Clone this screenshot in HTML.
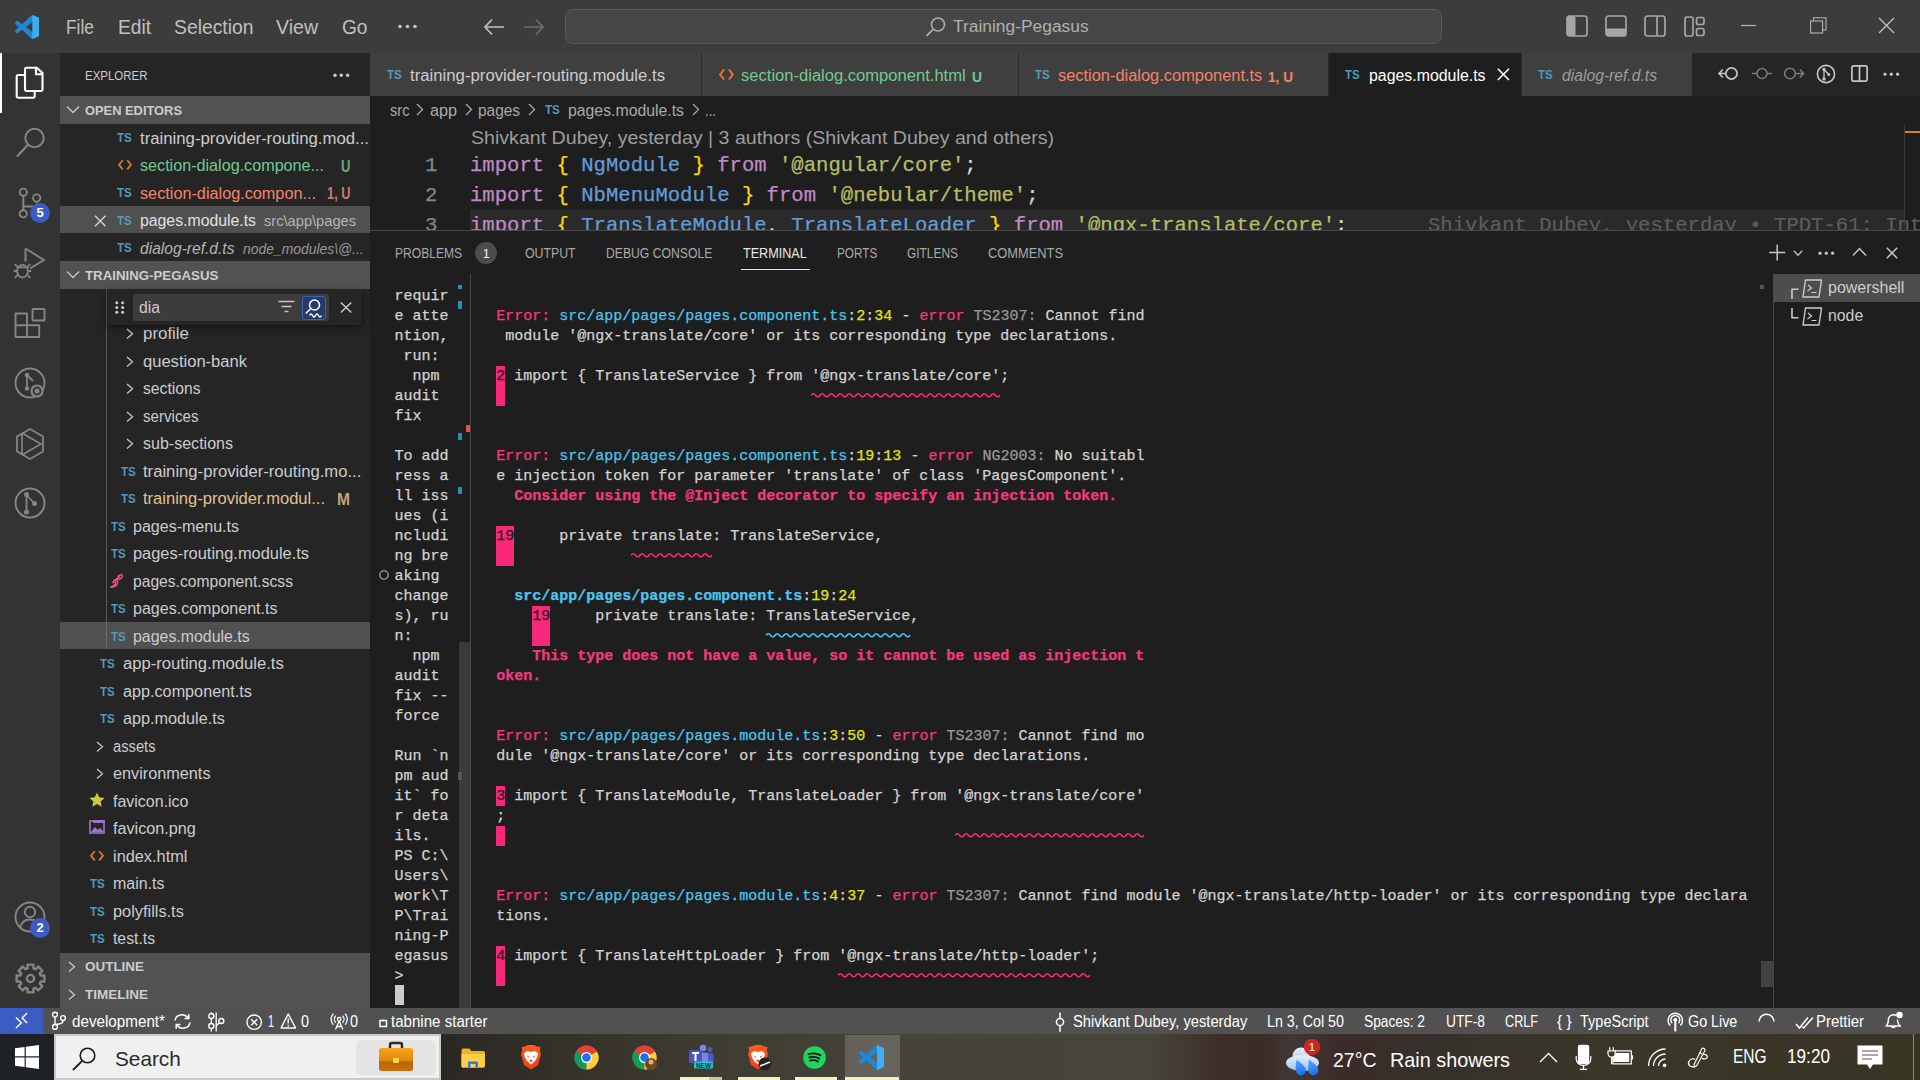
<!DOCTYPE html>
<html><head><meta charset="utf-8">
<style>
*{margin:0;padding:0;box-sizing:border-box}
html,body{width:1920px;height:1080px;overflow:hidden;background:#1e1e1e;font-family:"Liberation Sans",sans-serif;color:#cccccc}
.a{position:absolute}
.t{position:absolute;white-space:pre;line-height:1}
.mono{font-family:"Liberation Mono",monospace;-webkit-text-stroke:0.25px currentColor}
svg{position:absolute;overflow:visible}
#title{left:0;top:0;width:1920px;height:53px;background:#3c3c3c}
#act{left:0;top:53px;width:60px;height:955px;background:#333333}
#side{left:60px;top:53px;width:310px;height:955px;background:#252526}
#tabs{left:370px;top:53px;width:1550px;height:43px;background:#252526}
#editor{left:370px;top:96px;width:1550px;height:135px;background:#1e1e1e}
#panel{left:370px;top:230px;width:1550px;height:778px;background:#1e1e1e;border-top:1px solid #474747}
#status{left:0;top:1008px;width:1920px;height:26px;background:#515151}
#taskbar{left:0;top:1034px;width:1920px;height:46px;background:linear-gradient(90deg,#1e2226 0.00%,#1e2226 2.81%,#2b2723 22.92%,#34302a 29.17%,#3e3c31 36.46%,#46443a 46.88%,#47453a 59.90%,#3d2e27 63.54%,#3b2b25 65.62%,#403836 67.19%,#3c2b28 69.79%,#35302b 73.96%,#3a3629 83.33%,#393525 100.00%)}
.hdr{position:absolute;left:60px;width:310px;height:28px;background:#525252}
.sel{position:absolute;left:60px;width:310px;height:27px;background:#505050}
.si{font-size:16.2px;color:#cccccc}
.ts{position:absolute;font-family:"Liberation Sans",sans-serif;font-weight:bold;font-size:13px;color:#519aba;line-height:1;letter-spacing:-0.5px}
</style></head><body>
<div id="title" class="a"></div>
<div id="act" class="a"></div>
<div id="side" class="a"></div>
<div id="tabs" class="a"></div>
<div id="editor" class="a"></div>
<div id="panel" class="a"></div>
<div id="status" class="a"></div>
<div id="taskbar" class="a"></div>

<!-- TITLE BAR -->
<svg style="left:15px;top:15px" width="24" height="24" viewBox="0 0 100 100">
<defs><linearGradient id="vsg" x1="0" y1="0" x2="0" y2="1"><stop offset="0" stop-color="#3a9ee0"/><stop offset="1" stop-color="#0f7fd4"/></linearGradient></defs>
<path fill="#1e88d8" d="M96.46 10.8L75.86.87a6.23 6.23 0 0 0-7.1 1.2L29.33 38.04 12.15 25.01a4.16 4.16 0 0 0-5.32.24L1.33 30.25a4.16 4.16 0 0 0 0 6.16L16.23 50 1.33 63.6a4.16 4.16 0 0 0 0 6.14l5.5 5a4.16 4.16 0 0 0 5.32.24l17.18-13.04 39.43 35.97a6.23 6.23 0 0 0 7.1 1.2l20.6-9.92A6.25 6.25 0 0 0 100 83.6V16.4a6.25 6.25 0 0 0-3.54-5.6zM75.01 72.7L45.1 50l29.9-22.7v45.4z"/>
<path fill="#3fb0f6" d="M75.86.87a6.23 6.23 0 0 0-7.1 1.2L72 0v100l3.86-.87 20.6-9.92A6.25 6.25 0 0 0 100 83.6V16.4a6.25 6.25 0 0 0-3.54-5.6z" opacity="0.9"/>
</svg>
<svg style="left:398px;top:24px" width="20" height="5"><circle cx="2" cy="2.5" r="1.8" fill="#c3c3c3"/><circle cx="9.5" cy="2.5" r="1.8" fill="#c3c3c3"/><circle cx="17" cy="2.5" r="1.8" fill="#c3c3c3"/></svg>
<svg style="left:484px;top:18px" width="21" height="18"><path d="M8 1.5L1 9l7 7.5M1 9h19" stroke="#c0c0c0" stroke-width="1.7" fill="none"/></svg>
<svg style="left:523px;top:18px" width="21" height="18"><path d="M13 1.5L20 9l-7 7.5M20 9H1" stroke="#6e6e6e" stroke-width="1.7" fill="none"/></svg>
<div class="a" style="left:565px;top:9px;width:877px;height:35px;border-radius:8px;background:#464646;border:1px solid #595959"></div>
<svg style="left:925px;top:16px" width="22" height="22"><circle cx="13" cy="8.5" r="6.5" stroke="#aaaaaa" stroke-width="1.6" fill="none"/><path d="M8.3 13.2L1.5 20" stroke="#aaaaaa" stroke-width="1.8"/></svg>
<div class="t" style="left:953px;top:18px;font-size:17.4px;color:#b0b0b0">Training-Pegasus</div>
<!-- layout icons -->
<svg style="left:1566px;top:15px" width="22" height="22"><rect x="1" y="1" width="20" height="20" rx="2.5" stroke="#a6a6a6" stroke-width="1.7" fill="none"/><rect x="1" y="1" width="8.5" height="20" rx="2" fill="#a6a6a6"/></svg>
<svg style="left:1605px;top:15px" width="22" height="22"><rect x="1" y="1" width="20" height="20" rx="2.5" stroke="#a6a6a6" stroke-width="1.7" fill="none"/><rect x="1" y="13.5" width="20" height="7.5" rx="2" fill="#a6a6a6"/></svg>
<svg style="left:1644px;top:15px" width="22" height="22"><rect x="1" y="1" width="20" height="20" rx="2.5" stroke="#a6a6a6" stroke-width="1.7" fill="none"/><path d="M13 1v20" stroke="#a6a6a6" stroke-width="1.7"/></svg>
<svg style="left:1684px;top:16px" width="21" height="21"><rect x="1" y="1" width="8" height="19" rx="2" stroke="#a6a6a6" stroke-width="1.7" fill="none"/><rect x="12.5" y="1.5" width="7.5" height="7" rx="2" stroke="#a6a6a6" stroke-width="1.7" fill="none"/><rect x="12.5" y="12.5" width="7.5" height="7" rx="2" stroke="#a6a6a6" stroke-width="1.7" fill="none"/></svg>
<svg style="left:1741px;top:24px" width="16" height="3"><path d="M0 1.5h15" stroke="#b5b5b5" stroke-width="1.2"/></svg>
<svg style="left:1810px;top:17px" width="17" height="17"><rect x="0.6" y="4" width="12" height="12" stroke="#b5b5b5" stroke-width="1.1" fill="none"/><path d="M3.5 4V0.8h12.5v12.2H12.6" stroke="#b5b5b5" stroke-width="1.1" fill="none"/></svg>
<svg style="left:1878px;top:17px" width="17" height="17"><path d="M1 1l15 15M16 1L1 16" stroke="#c5c5c5" stroke-width="1.2"/></svg>

<!-- ACTIVITY BAR -->
<div class="a" style="left:0;top:53px;width:2px;height:60px;background:#ffffff"></div>
<svg style="left:15px;top:66px" width="30" height="34"><path d="M9.5 9H3.2a1.5 1.5 0 0 0-1.5 1.5v19.7a1.5 1.5 0 0 0 1.5 1.5h15a1.5 1.5 0 0 0 1.5-1.5V25" stroke="#ffffff" stroke-width="2.1" fill="none"/><path d="M10 3.2a1.5 1.5 0 0 1 1.5-1.5h10.3l5.7 5.2v16.6a1.5 1.5 0 0 1-1.5 1.5H11.5a1.5 1.5 0 0 1-1.5-1.5z" stroke="#ffffff" stroke-width="2.1" fill="none"/><path d="M21 2v6.2h6.5" stroke="#ffffff" stroke-width="2.1" fill="none"/></svg>
<svg style="left:15px;top:126px" width="32" height="34"><circle cx="19.5" cy="12" r="9.2" stroke="#858585" stroke-width="2" fill="none"/><path d="M13 18.8L2 30.5" stroke="#858585" stroke-width="2.2"/></svg>
<svg style="left:15px;top:185px" width="32" height="36"><circle cx="8.3" cy="7.2" r="3.6" stroke="#858585" stroke-width="1.9" fill="none"/><circle cx="8.3" cy="28.8" r="3.6" stroke="#858585" stroke-width="1.9" fill="none"/><circle cx="21.7" cy="13" r="3.6" stroke="#858585" stroke-width="1.9" fill="none"/><path d="M8.3 10.8v14.4M8.3 21.5h10M21.7 16.6v2" stroke="#858585" stroke-width="1.9" fill="none"/></svg>
<div class="a" style="left:30px;top:203px;width:20px;height:20px;border-radius:10px;background:#3b5cc5;color:#fff;font-size:13px;font-weight:bold;text-align:center;line-height:20px">5</div>
<svg style="left:13px;top:244px" width="34" height="36"><path d="M12.5 4.5v13M12.5 4.5l18.5 11.5-14 8.5" stroke="#858585" stroke-width="2" fill="none" stroke-linejoin="round"/><g stroke="#858585" stroke-width="1.8" fill="none"><ellipse cx="9.5" cy="27.2" rx="5.4" ry="6.3"/><path d="M4.5 23.3h10M1.8 20l2.8 3.2M0.8 27h3.4M1.8 34l2.8-3M17.2 20l-2.8 3.2M18.2 27h-3.4M17.2 34l-2.8-3"/></g></svg>
<svg style="left:0px;top:0px" width="60" height="400"><g stroke="#858585" stroke-width="1.9" fill="none" stroke-linejoin="round"><path d="M15.5 313.5h11.5v23.5H15.5zM15.5 325.3h23.7v11.7H27"/><rect x="32.5" y="309" width="12" height="11.5" rx="0.8"/></g></svg>
<svg style="left:13px;top:366px" width="34" height="34"><circle cx="17" cy="17" r="14.5" stroke="#858585" stroke-width="1.9" fill="none"/><circle cx="14" cy="9" r="2.3" fill="#858585"/><circle cx="14" cy="22.5" r="2.3" fill="#858585"/><path d="M14 9v13.5M14 9l6 6" stroke="#858585" stroke-width="1.8" fill="none"/><circle cx="24" cy="25" r="5.5" stroke="#858585" stroke-width="2.2" fill="#333333"/><circle cx="24" cy="25" r="2.5" fill="#858585"/></svg>
<svg style="left:14px;top:427px" width="32" height="32"><path d="M16 2l13 7.5v15L16 32 3 24.5v-15z" stroke="#858585" stroke-width="1.8" fill="none" stroke-linejoin="round"/><path d="M8 6v22M8 6l19 11L8 28" stroke="#858585" stroke-width="1.6" fill="none"/></svg>
<svg style="left:13px;top:486px" width="34" height="34"><circle cx="17" cy="17" r="14.5" stroke="#858585" stroke-width="1.9" fill="none"/><circle cx="13.5" cy="8.5" r="2.5" fill="#858585"/><circle cx="13.5" cy="26" r="2.6" fill="#858585"/><circle cx="21.5" cy="17.5" r="2.5" fill="#858585"/><path d="M13.5 8.5v17.5M13.5 9l8 8.5" stroke="#858585" stroke-width="1.8" fill="none"/></svg>
<svg style="left:13px;top:900px" width="34" height="34"><circle cx="17" cy="17" r="14.5" stroke="#858585" stroke-width="1.9" fill="none"/><circle cx="17" cy="12" r="5.2" stroke="#858585" stroke-width="1.9" fill="none"/><path d="M7 28c1.5-6 5-8.5 10-8.5s8.5 2.5 10 8.5" stroke="#858585" stroke-width="1.9" fill="none"/></svg>
<div class="a" style="left:30px;top:918px;width:20px;height:20px;border-radius:10px;background:#3b5cc5;color:#fff;font-size:13px;font-weight:bold;text-align:center;line-height:20px">2</div>
<svg style="left:14.5px;top:962.5px" width="31" height="31"><path d="M25.69 12.58 L29.39 12.55 L29.39 18.45 L25.69 18.42 L24.77 20.64 L27.41 23.23 L23.23 27.41 L20.64 24.77 L18.42 25.69 L18.45 29.39 L12.55 29.39 L12.58 25.69 L10.36 24.77 L7.77 27.41 L3.59 23.23 L6.23 20.64 L5.31 18.42 L1.61 18.45 L1.61 12.55 L5.31 12.58 L6.23 10.36 L3.59 7.77 L7.77 3.59 L10.36 6.23 L12.58 5.31 L12.55 1.61 L18.45 1.61 L18.42 5.31 L20.64 6.23 L23.23 3.59 L27.41 7.77 L24.77 10.36z" stroke="#858585" stroke-width="2.4" fill="none" stroke-linejoin="round"/><circle cx="15.5" cy="15.5" r="3.6" stroke="#858585" stroke-width="2.3" fill="none"/></svg>


<div class="t" style="left:65.60px;top:16.85px;font-size:20.5px;color:#c0c0c0;font-weight:normal;font-style:normal;font-family:'Liberation Sans';transform:scaleX(0.8477);transform-origin:0 0;">File</div>
<div class="t" style="left:118.00px;top:16.85px;font-size:20.5px;color:#c0c0c0;font-weight:normal;font-style:normal;font-family:'Liberation Sans';transform:scaleX(0.9342);transform-origin:0 0;">Edit</div>
<div class="t" style="left:174.00px;top:16.85px;font-size:20.5px;color:#c0c0c0;font-weight:normal;font-style:normal;font-family:'Liberation Sans';transform:scaleX(0.9427);transform-origin:0 0;">Selection</div>
<div class="t" style="left:276.00px;top:16.85px;font-size:20.5px;color:#c0c0c0;font-weight:normal;font-style:normal;font-family:'Liberation Sans';transform:scaleX(0.9532);transform-origin:0 0;">View</div>
<div class="t" style="left:342.00px;top:16.85px;font-size:20.5px;color:#c0c0c0;font-weight:normal;font-style:normal;font-family:'Liberation Sans';transform:scaleX(0.9325);transform-origin:0 0;">Go</div>
<div class="t" style="left:85.00px;top:68.99px;font-size:13.6px;color:#cccccc;font-weight:normal;font-style:normal;font-family:'Liberation Sans';transform:scaleX(0.8442);transform-origin:0 0;">EXPLORER</div>
<svg style="left:333px;top:73px" width="17" height="5"><circle cx="2" cy="2.2" r="1.7" fill="#cccccc"/><circle cx="8.3" cy="2.2" r="1.7" fill="#cccccc"/><circle cx="14.6" cy="2.2" r="1.7" fill="#cccccc"/></svg>
<div class="hdr" style="top:96px"></div>
<svg style="left:66px;top:105px" width="14" height="9"><path d="M1 1.5l6 6 6-6" stroke="#c5c5c5" stroke-width="1.4" fill="none"/></svg>
<div class="t" style="left:85.00px;top:103.83px;font-size:13.2px;color:#cccccc;font-weight:bold;font-style:normal;font-family:'Liberation Sans';transform:scaleX(0.9757);transform-origin:0 0;">OPEN EDITORS</div>
<div class="t" style="left:117.30px;top:132.37px;font-size:12.2px;color:#519aba;font-weight:bold;font-style:normal;font-family:'Liberation Sans';transform:scaleX(0.9503);transform-origin:0 0;letter-spacing:0px">TS</div>
<div class="t" style="left:140.30px;top:130.66px;font-size:16px;color:#cccccc;font-weight:normal;font-style:normal;font-family:'Liberation Sans';transform:scaleX(1.0468);transform-origin:0 0;">training-provider-routing.mod...</div>
<svg style="left:117.5px;top:159.2px" width="14" height="12"><path d="M4.8 1.2L1 5.8l3.8 4.6M9.2 1.2L13 5.8l-3.8 4.6" stroke="#e37933" stroke-width="1.7" fill="none"/></svg>
<div class="t" style="left:140.30px;top:158.16px;font-size:16px;color:#73c991;font-weight:normal;font-style:normal;font-family:'Liberation Sans';transform:scaleX(1.0092);transform-origin:0 0;">section-dialog.compone...</div>
<div class="t" style="left:341.00px;top:157.73px;font-size:16.5px;color:#6fa57f;font-weight:bold;font-style:normal;font-family:'Liberation Sans';transform:scaleX(0.7973);transform-origin:0 0;">U</div>
<div class="t" style="left:117.30px;top:187.37px;font-size:12.2px;color:#519aba;font-weight:bold;font-style:normal;font-family:'Liberation Sans';transform:scaleX(0.9503);transform-origin:0 0;letter-spacing:0px">TS</div>
<div class="t" style="left:140.30px;top:185.66px;font-size:16px;color:#f3826d;font-weight:normal;font-style:normal;font-family:'Liberation Sans';transform:scaleX(1.0148);transform-origin:0 0;">section-dialog.compon...</div>
<div class="t" style="left:326.60px;top:185.23px;font-size:16.5px;color:#c97a68;font-weight:bold;font-style:normal;font-family:'Liberation Sans';transform:scaleX(0.7766);transform-origin:0 0;">1, U</div>
<div class="sel" style="top:206.2px;height:27px"></div>
<svg style="left:94px;top:215.2px" width="13" height="12"><path d="M1 0.8l10.5 10.5M11.5 0.8L1 11.3" stroke="#d0d0d0" stroke-width="1.5"/></svg>
<div class="t" style="left:117.30px;top:214.87px;font-size:12.2px;color:#519aba;font-weight:bold;font-style:normal;font-family:'Liberation Sans';transform:scaleX(0.9503);transform-origin:0 0;letter-spacing:0px">TS</div>
<div class="t" style="left:140.30px;top:213.16px;font-size:16px;color:#e0e0e0;font-weight:normal;font-style:normal;font-family:'Liberation Sans';transform:scaleX(0.9880);transform-origin:0 0;">pages.module.ts</div>
<div class="t" style="left:264.40px;top:214.34px;font-size:14.6px;color:#b5b5b5;font-weight:normal;font-style:normal;font-family:'Liberation Sans';transform:scaleX(1.0036);transform-origin:0 0;">src\app\pages</div>
<div class="t" style="left:117.30px;top:242.37px;font-size:12.2px;color:#519aba;font-weight:bold;font-style:normal;font-family:'Liberation Sans';transform:scaleX(0.9503);transform-origin:0 0;letter-spacing:0px">TS</div>
<div class="t" style="left:140.30px;top:240.66px;font-size:16px;color:#b4b4b4;font-weight:normal;font-style:italic;font-family:'Liberation Sans';transform:scaleX(0.9749);transform-origin:0 0;">dialog-ref.d.ts</div>
<div class="t" style="left:243.00px;top:241.84px;font-size:14.6px;color:#989898;font-weight:normal;font-style:italic;font-family:'Liberation Sans';transform:scaleX(0.9521);transform-origin:0 0;">node_modules\@...</div>
<div class="hdr" style="top:261px"></div>
<svg style="left:66px;top:270px" width="14" height="9"><path d="M1 1.5l6 6 6-6" stroke="#c5c5c5" stroke-width="1.4" fill="none"/></svg>
<div class="t" style="left:85.00px;top:269.03px;font-size:13.2px;color:#cccccc;font-weight:bold;font-style:normal;font-family:'Liberation Sans';transform:scaleX(1.0052);transform-origin:0 0;">TRAINING-PEGASUS</div>
<div class="a" style="left:106px;top:289px;width:1px;height:360px;background:#5a5a5a"></div>
<svg style="left:125.5px;top:328.0px" width="9" height="12"><path d="M1 1l5.5 4.8L1 10.6" stroke="#c5c5c5" stroke-width="1.3" fill="none"/></svg>
<div class="t" style="left:142.50px;top:326.46px;font-size:16px;color:#cccccc;font-weight:normal;font-style:normal;font-family:'Liberation Sans';transform:scaleX(1.0556);transform-origin:0 0;">profile</div>
<svg style="left:125.5px;top:355.5px" width="9" height="12"><path d="M1 1l5.5 4.8L1 10.6" stroke="#c5c5c5" stroke-width="1.3" fill="none"/></svg>
<div class="t" style="left:142.50px;top:353.96px;font-size:16px;color:#cccccc;font-weight:normal;font-style:normal;font-family:'Liberation Sans';transform:scaleX(1.0347);transform-origin:0 0;">question-bank</div>
<svg style="left:125.5px;top:383.0px" width="9" height="12"><path d="M1 1l5.5 4.8L1 10.6" stroke="#c5c5c5" stroke-width="1.3" fill="none"/></svg>
<div class="t" style="left:142.50px;top:381.46px;font-size:16px;color:#cccccc;font-weight:normal;font-style:normal;font-family:'Liberation Sans';transform:scaleX(0.9796);transform-origin:0 0;">sections</div>
<svg style="left:125.5px;top:410.5px" width="9" height="12"><path d="M1 1l5.5 4.8L1 10.6" stroke="#c5c5c5" stroke-width="1.3" fill="none"/></svg>
<div class="t" style="left:142.50px;top:408.96px;font-size:16px;color:#cccccc;font-weight:normal;font-style:normal;font-family:'Liberation Sans';transform:scaleX(0.9458);transform-origin:0 0;">services</div>
<svg style="left:125.5px;top:438.0px" width="9" height="12"><path d="M1 1l5.5 4.8L1 10.6" stroke="#c5c5c5" stroke-width="1.3" fill="none"/></svg>
<div class="t" style="left:142.50px;top:436.46px;font-size:16px;color:#cccccc;font-weight:normal;font-style:normal;font-family:'Liberation Sans';transform:scaleX(1.0020);transform-origin:0 0;">sub-sections</div>
<div class="t" style="left:120.60px;top:465.67px;font-size:12.2px;color:#519aba;font-weight:bold;font-style:normal;font-family:'Liberation Sans';transform:scaleX(0.9503);transform-origin:0 0;letter-spacing:0px">TS</div>
<div class="t" style="left:143.00px;top:463.96px;font-size:16px;color:#cccccc;font-weight:normal;font-style:normal;font-family:'Liberation Sans';transform:scaleX(1.0402);transform-origin:0 0;">training-provider-routing.mo...</div>
<div class="t" style="left:120.60px;top:493.17px;font-size:12.2px;color:#519aba;font-weight:bold;font-style:normal;font-family:'Liberation Sans';transform:scaleX(0.9503);transform-origin:0 0;letter-spacing:0px">TS</div>
<div class="t" style="left:143.00px;top:491.46px;font-size:16px;color:#e2c08d;font-weight:normal;font-style:normal;font-family:'Liberation Sans';transform:scaleX(1.0336);transform-origin:0 0;">training-provider.modul...</div>
<div class="t" style="left:337.00px;top:491.03px;font-size:16.5px;color:#c4a67a;font-weight:bold;font-style:normal;font-family:'Liberation Sans';transform:scaleX(0.9458);transform-origin:0 0;">M</div>
<div class="sel" style="top:622.3px;height:26.6px"></div>
<div class="a" style="left:106px;top:622px;width:1px;height:27px;background:#6a6a6a"></div>
<div class="t" style="left:111.00px;top:520.67px;font-size:12.2px;color:#519aba;font-weight:bold;font-style:normal;font-family:'Liberation Sans';transform:scaleX(0.9503);transform-origin:0 0;letter-spacing:0px">TS</div>
<div class="t" style="left:132.50px;top:518.96px;font-size:16px;color:#cccccc;font-weight:normal;font-style:normal;font-family:'Liberation Sans';transform:scaleX(1.0016);transform-origin:0 0;">pages-menu.ts</div>
<div class="t" style="left:111.00px;top:548.17px;font-size:12.2px;color:#519aba;font-weight:bold;font-style:normal;font-family:'Liberation Sans';transform:scaleX(0.9503);transform-origin:0 0;letter-spacing:0px">TS</div>
<div class="t" style="left:132.50px;top:546.46px;font-size:16px;color:#cccccc;font-weight:normal;font-style:normal;font-family:'Liberation Sans';transform:scaleX(1.0253);transform-origin:0 0;">pages-routing.module.ts</div>
<svg style="left:110px;top:572.5px" width="14" height="16"><path d="M9 2.5c2.5-1.5 4-.5 3 1.5-1 2-4.5 3-6.5 3.5 2.5.5 3 2.5 1 4.5-1.5 1.5-4.5 3-5.5 2 1.5-.5 4-2 4.5-3.5.3-1-1-1.5-2.5-1.2 0-1.5 3-3 5-4.2 1.5-1 1.8-2-.5-1.5z" stroke="#f55385" stroke-width="1.4" fill="none"/></svg>
<div class="t" style="left:132.50px;top:573.96px;font-size:16px;color:#cccccc;font-weight:normal;font-style:normal;font-family:'Liberation Sans';transform:scaleX(0.9777);transform-origin:0 0;">pages.component.scss</div>
<div class="t" style="left:111.00px;top:603.17px;font-size:12.2px;color:#519aba;font-weight:bold;font-style:normal;font-family:'Liberation Sans';transform:scaleX(0.9503);transform-origin:0 0;letter-spacing:0px">TS</div>
<div class="t" style="left:132.50px;top:601.46px;font-size:16px;color:#cccccc;font-weight:normal;font-style:normal;font-family:'Liberation Sans';transform:scaleX(1.0028);transform-origin:0 0;">pages.component.ts</div>
<div class="t" style="left:111.00px;top:630.67px;font-size:12.2px;color:#519aba;font-weight:bold;font-style:normal;font-family:'Liberation Sans';transform:scaleX(0.9503);transform-origin:0 0;letter-spacing:0px">TS</div>
<div class="t" style="left:132.50px;top:628.96px;font-size:16px;color:#cccccc;font-weight:normal;font-style:normal;font-family:'Liberation Sans';transform:scaleX(0.9944);transform-origin:0 0;">pages.module.ts</div>
<div class="t" style="left:99.60px;top:658.17px;font-size:12.2px;color:#519aba;font-weight:bold;font-style:normal;font-family:'Liberation Sans';transform:scaleX(0.9503);transform-origin:0 0;letter-spacing:0px">TS</div>
<div class="t" style="left:122.50px;top:656.46px;font-size:16px;color:#cccccc;font-weight:normal;font-style:normal;font-family:'Liberation Sans';transform:scaleX(1.0387);transform-origin:0 0;">app-routing.module.ts</div>
<div class="t" style="left:99.60px;top:685.67px;font-size:12.2px;color:#519aba;font-weight:bold;font-style:normal;font-family:'Liberation Sans';transform:scaleX(0.9503);transform-origin:0 0;letter-spacing:0px">TS</div>
<div class="t" style="left:122.50px;top:683.96px;font-size:16px;color:#cccccc;font-weight:normal;font-style:normal;font-family:'Liberation Sans';transform:scaleX(1.0122);transform-origin:0 0;">app.component.ts</div>
<div class="t" style="left:99.60px;top:713.17px;font-size:12.2px;color:#519aba;font-weight:bold;font-style:normal;font-family:'Liberation Sans';transform:scaleX(0.9503);transform-origin:0 0;letter-spacing:0px">TS</div>
<div class="t" style="left:122.50px;top:711.46px;font-size:16px;color:#cccccc;font-weight:normal;font-style:normal;font-family:'Liberation Sans';transform:scaleX(1.0124);transform-origin:0 0;">app.module.ts</div>
<svg style="left:95.5px;top:740.5px" width="9" height="12"><path d="M1 1l5.5 4.8L1 10.6" stroke="#c5c5c5" stroke-width="1.3" fill="none"/></svg>
<div class="t" style="left:112.50px;top:738.96px;font-size:16px;color:#cccccc;font-weight:normal;font-style:normal;font-family:'Liberation Sans';transform:scaleX(0.9191);transform-origin:0 0;">assets</div>
<svg style="left:95.5px;top:768.0px" width="9" height="12"><path d="M1 1l5.5 4.8L1 10.6" stroke="#c5c5c5" stroke-width="1.3" fill="none"/></svg>
<div class="t" style="left:112.50px;top:766.46px;font-size:16px;color:#cccccc;font-weight:normal;font-style:normal;font-family:'Liberation Sans';transform:scaleX(1.0151);transform-origin:0 0;">environments</div>
<svg style="left:89px;top:791.5px" width="16" height="16"><path d="M8 .5l2.2 4.8 5.3.6-3.9 3.6 1.1 5.2L8 12.1l-4.7 2.6 1.1-5.2L.5 5.9l5.3-.6z" fill="#cbcb41"/></svg>
<div class="t" style="left:112.50px;top:793.96px;font-size:16px;color:#cccccc;font-weight:normal;font-style:normal;font-family:'Liberation Sans';transform:scaleX(0.9988);transform-origin:0 0;">favicon.ico</div>
<svg style="left:89px;top:820.0px" width="16" height="14"><rect x="1" y="1" width="14" height="12" stroke="#a074c4" stroke-width="1.6" fill="none"/><path d="M2 12l4-5 3 3 2-2 4 4z" fill="#a074c4"/><rect x="4" y="0" width="12" height="3" fill="#a074c4"/></svg>
<div class="t" style="left:112.50px;top:821.46px;font-size:16px;color:#cccccc;font-weight:normal;font-style:normal;font-family:'Liberation Sans';transform:scaleX(1.0118);transform-origin:0 0;">favicon.png</div>
<svg style="left:89.5px;top:850.0px" width="14" height="12"><path d="M4.8 1.2L1 5.8l3.8 4.6M9.2 1.2L13 5.8l-3.8 4.6" stroke="#e37933" stroke-width="1.7" fill="none"/></svg>
<div class="t" style="left:112.50px;top:848.96px;font-size:16px;color:#cccccc;font-weight:normal;font-style:normal;font-family:'Liberation Sans';transform:scaleX(1.0203);transform-origin:0 0;">index.html</div>
<div class="t" style="left:89.50px;top:878.17px;font-size:12.2px;color:#519aba;font-weight:bold;font-style:normal;font-family:'Liberation Sans';transform:scaleX(0.9503);transform-origin:0 0;letter-spacing:0px">TS</div>
<div class="t" style="left:112.50px;top:876.46px;font-size:16px;color:#cccccc;font-weight:normal;font-style:normal;font-family:'Liberation Sans';transform:scaleX(0.9967);transform-origin:0 0;">main.ts</div>
<div class="t" style="left:89.50px;top:905.67px;font-size:12.2px;color:#519aba;font-weight:bold;font-style:normal;font-family:'Liberation Sans';transform:scaleX(0.9503);transform-origin:0 0;letter-spacing:0px">TS</div>
<div class="t" style="left:112.50px;top:903.96px;font-size:16px;color:#cccccc;font-weight:normal;font-style:normal;font-family:'Liberation Sans';transform:scaleX(1.0209);transform-origin:0 0;">polyfills.ts</div>
<div class="t" style="left:89.50px;top:933.17px;font-size:12.2px;color:#519aba;font-weight:bold;font-style:normal;font-family:'Liberation Sans';transform:scaleX(0.9503);transform-origin:0 0;letter-spacing:0px">TS</div>
<div class="t" style="left:112.50px;top:931.46px;font-size:16px;color:#cccccc;font-weight:normal;font-style:normal;font-family:'Liberation Sans';transform:scaleX(0.9841);transform-origin:0 0;">test.ts</div>
<div class="hdr" style="top:953px;height:27.5px"></div>
<div class="hdr" style="top:980.5px;height:27.5px"></div>
<svg style="left:68px;top:960.5px" width="9" height="12"><path d="M1 1l5.5 4.8L1 10.6" stroke="#c5c5c5" stroke-width="1.3" fill="none"/></svg>
<div class="t" style="left:85.00px;top:960.33px;font-size:13.2px;color:#cccccc;font-weight:bold;font-style:normal;font-family:'Liberation Sans';transform:scaleX(1.0194);transform-origin:0 0;">OUTLINE</div>
<svg style="left:68px;top:988.5px" width="9" height="12"><path d="M1 1l5.5 4.8L1 10.6" stroke="#c5c5c5" stroke-width="1.3" fill="none"/></svg>
<div class="t" style="left:85.00px;top:987.83px;font-size:13.2px;color:#cccccc;font-weight:bold;font-style:normal;font-family:'Liberation Sans';transform:scaleX(1.0237);transform-origin:0 0;">TIMELINE</div>
<div class="a" style="left:107px;top:289px;width:255px;height:36px;background:#252526;box-shadow:0 2px 6px rgba(0,0,0,0.5)"></div>
<svg style="left:115px;top:301px" width="10" height="13"><g fill="#cccccc"><circle cx="1.8" cy="1.8" r="1.5"/><circle cx="7.6" cy="1.8" r="1.5"/><circle cx="1.8" cy="6.5" r="1.5"/><circle cx="7.6" cy="6.5" r="1.5"/><circle cx="1.8" cy="11.2" r="1.5"/><circle cx="7.6" cy="11.2" r="1.5"/></g></svg>
<div class="a" style="left:133px;top:293.5px;width:196px;height:27.5px;background:#3c3c3c;border-radius:2px"></div>
<div class="t" style="left:139.00px;top:300.46px;font-size:16px;color:#cccccc;font-weight:normal;font-style:normal;font-family:'Liberation Sans';transform:scaleX(0.9835);transform-origin:0 0;">dia</div>
<svg style="left:278px;top:300px" width="17" height="13"><path d="M0.5 1.5h16M3.5 6.5h10M6.5 11.5h4" stroke="#c5c5c5" stroke-width="1.4"/></svg>
<div class="a" style="left:301.5px;top:295.5px;width:24.5px;height:24.5px;background:#263a6a;border:1px solid #3d5fc0;border-radius:3px"></div>
<svg style="left:304px;top:298px" width="20" height="20"><circle cx="10.5" cy="7" r="5" stroke="#ffffff" stroke-width="1.5" fill="none"/><path d="M6.8 10.5L1.8 15.5" stroke="#ffffff" stroke-width="1.5" fill="none"/><path d="M5.5 17.5q1.5-3 3 0t3 0 3 0 3 0" stroke="#ffffff" stroke-width="1.4" fill="none"/></svg>
<svg style="left:340px;top:302px" width="12" height="11"><path d="M0.8 0.5l10.5 10M11.3 0.5L0.8 10.5" stroke="#cccccc" stroke-width="1.4"/></svg>
<div class="a" style="left:370px;top:53px;width:1322px;height:43px;background:#3f3f3f"></div>
<div class="a" style="left:1328.5px;top:53px;width:192.5px;height:43px;background:#1e1e1e"></div>
<div class="a" style="left:700.5px;top:53px;width:1px;height:43px;background:#2b2b2b"></div>
<div class="a" style="left:1017.5px;top:53px;width:1px;height:43px;background:#2b2b2b"></div>
<div class="a" style="left:1328px;top:53px;width:1px;height:43px;background:#2b2b2b"></div>
<div class="a" style="left:1521px;top:53px;width:1px;height:43px;background:#2b2b2b"></div>
<div class="t" style="left:387.00px;top:68.87px;font-size:12.2px;color:#519aba;font-weight:bold;font-style:normal;font-family:'Liberation Sans';transform:scaleX(0.9503);transform-origin:0 0;letter-spacing:0px">TS</div>
<div class="t" style="left:410.00px;top:67.66px;font-size:16px;color:#cccccc;font-weight:normal;font-style:normal;font-family:'Liberation Sans';transform:scaleX(1.0465);transform-origin:0 0;">training-provider-routing.module.ts</div>
<svg style="left:719px;top:68px" width="15" height="13"><path d="M5 1.5L1.2 6.5 5 11.5M10 1.5l3.8 5-3.8 5" stroke="#e37933" stroke-width="2" fill="none"/></svg>
<div class="t" style="left:741.00px;top:67.66px;font-size:16px;color:#73c991;font-weight:normal;font-style:normal;font-family:'Liberation Sans';transform:scaleX(1.0354);transform-origin:0 0;">section-dialog.component.html</div>
<div class="t" style="left:972.00px;top:68.50px;font-size:15px;color:#73c991;font-weight:bold;font-style:normal;font-family:'Liberation Sans';transform:scaleX(0.9231);transform-origin:0 0;">U</div>
<div class="t" style="left:1034.60px;top:68.87px;font-size:12.2px;color:#519aba;font-weight:bold;font-style:normal;font-family:'Liberation Sans';transform:scaleX(0.9503);transform-origin:0 0;letter-spacing:0px">TS</div>
<div class="t" style="left:1058.30px;top:67.66px;font-size:16px;color:#f3826d;font-weight:normal;font-style:normal;font-family:'Liberation Sans';transform:scaleX(1.0255);transform-origin:0 0;">section-dialog.component.ts</div>
<div class="t" style="left:1268.00px;top:68.50px;font-size:15px;color:#f3826d;font-weight:bold;font-style:normal;font-family:'Liberation Sans';transform:scaleX(0.9088);transform-origin:0 0;">1, U</div>
<div class="t" style="left:1345.00px;top:68.87px;font-size:12.2px;color:#519aba;font-weight:bold;font-style:normal;font-family:'Liberation Sans';transform:scaleX(0.9503);transform-origin:0 0;letter-spacing:0px">TS</div>
<div class="t" style="left:1368.80px;top:67.66px;font-size:16px;color:#ffffff;font-weight:normal;font-style:normal;font-family:'Liberation Sans';transform:scaleX(0.9923);transform-origin:0 0;">pages.module.ts</div>
<svg style="left:1497px;top:68px" width="13" height="13"><path d="M0.8 0.8l11.2 11.2M12 0.8L0.8 12" stroke="#ffffff" stroke-width="1.6"/></svg>
<div class="t" style="left:1538.40px;top:68.87px;font-size:12.2px;color:#519aba;font-weight:bold;font-style:normal;font-family:'Liberation Sans';transform:scaleX(0.9503);transform-origin:0 0;letter-spacing:0px">TS</div>
<div class="t" style="left:1562.00px;top:67.66px;font-size:16px;color:#9d9d9d;font-weight:normal;font-style:italic;font-family:'Liberation Sans';transform:scaleX(0.9800);transform-origin:0 0;">dialog-ref.d.ts</div>
<svg style="left:1718px;top:66px" width="22" height="15"><circle cx="13.5" cy="7.5" r="5.6" stroke="#c5c5c5" stroke-width="1.7" fill="none"/><path d="M8 7.5H1M4.8 3.5L1 7.5l3.8 4" stroke="#c5c5c5" stroke-width="1.6" fill="none"/></svg>
<svg style="left:1752px;top:66px" width="20" height="15"><circle cx="10" cy="7.5" r="5" stroke="#7a7a7a" stroke-width="1.6" fill="none"/><path d="M0 7.5h5M15 7.5h5" stroke="#7a7a7a" stroke-width="1.6"/></svg>
<svg style="left:1783px;top:66px" width="22" height="15"><circle cx="7" cy="7.5" r="5.3" stroke="#7a7a7a" stroke-width="1.6" fill="none"/><path d="M12.5 7.5H20M16.8 3.5l3.8 4-3.8 4" stroke="#7a7a7a" stroke-width="1.6" fill="none"/></svg>
<svg style="left:1816px;top:64px" width="20" height="20"><circle cx="10" cy="10" r="8.6" stroke="#c5c5c5" stroke-width="1.6" fill="none"/><circle cx="8" cy="5.3" r="1.6" fill="#c5c5c5"/><circle cx="8" cy="15" r="1.7" fill="#c5c5c5"/><circle cx="12.8" cy="10.5" r="1.5" fill="#c5c5c5"/><path d="M8 5v10M8 5.5l4.8 5" stroke="#c5c5c5" stroke-width="1.3" fill="none"/></svg>
<svg style="left:1851px;top:65px" width="17" height="17"><rect x="0.9" y="0.9" width="15.2" height="15.2" rx="1.5" stroke="#c5c5c5" stroke-width="1.7" fill="none"/><path d="M8.5 1v15" stroke="#c5c5c5" stroke-width="1.7"/></svg>
<svg style="left:1883px;top:72px" width="17" height="5"><circle cx="2" cy="2.2" r="1.6" fill="#c5c5c5"/><circle cx="8.3" cy="2.2" r="1.6" fill="#c5c5c5"/><circle cx="14.6" cy="2.2" r="1.6" fill="#c5c5c5"/></svg>
<div class="t" style="left:390.00px;top:103.06px;font-size:16px;color:#a9a9a9;font-weight:normal;font-style:normal;font-family:'Liberation Sans';transform:scaleX(0.9143);transform-origin:0 0;">src</div>
<svg style="left:416px;top:103.39999999999999px" width="8" height="13"><path d="M1 1l5.5 5.5L1 12" stroke="#a9a9a9" stroke-width="1.3" fill="none"/></svg>
<div class="t" style="left:430.00px;top:103.06px;font-size:16px;color:#a9a9a9;font-weight:normal;font-style:normal;font-family:'Liberation Sans';transform:scaleX(1.0114);transform-origin:0 0;">app</div>
<svg style="left:465px;top:103.39999999999999px" width="8" height="13"><path d="M1 1l5.5 5.5L1 12" stroke="#a9a9a9" stroke-width="1.3" fill="none"/></svg>
<div class="t" style="left:477.60px;top:103.06px;font-size:16px;color:#a9a9a9;font-weight:normal;font-style:normal;font-family:'Liberation Sans';transform:scaleX(0.9634);transform-origin:0 0;">pages</div>
<svg style="left:528px;top:103.39999999999999px" width="8" height="13"><path d="M1 1l5.5 5.5L1 12" stroke="#a9a9a9" stroke-width="1.3" fill="none"/></svg>
<div class="t" style="left:545.00px;top:104.27px;font-size:12.2px;color:#519aba;font-weight:bold;font-style:normal;font-family:'Liberation Sans';transform:scaleX(0.9503);transform-origin:0 0;letter-spacing:0px">TS</div>
<div class="t" style="left:568.40px;top:103.06px;font-size:16px;color:#a9a9a9;font-weight:normal;font-style:normal;font-family:'Liberation Sans';transform:scaleX(0.9880);transform-origin:0 0;">pages.module.ts</div>
<svg style="left:692px;top:103.39999999999999px" width="8" height="13"><path d="M1 1l5.5 5.5L1 12" stroke="#a9a9a9" stroke-width="1.3" fill="none"/></svg>
<div class="t" style="left:705.00px;top:103.06px;font-size:16px;color:#a9a9a9;font-weight:normal;font-style:normal;font-family:'Liberation Sans';transform:scaleX(0.8248);transform-origin:0 0;">...</div>
<div class="a" style="left:0;top:0;width:1920px;height:230px;overflow:hidden">
<div class="a" style="left:470px;top:209.5px;width:1434px;height:21px;background:#2a2a2a;border-top:1px solid #333333"></div>
<div class="t" style="left:471.00px;top:129.11px;font-size:18.3px;color:#9d9d9d;font-weight:normal;font-style:normal;font-family:'Liberation Sans';transform:scaleX(1.0717);transform-origin:0 0;">Shivkant Dubey, yesterday | 3 authors (Shivkant Dubey and others)</div>
<div class="t mono" style="left:425px;top:150.78px;font-size:20.6px;line-height:30px;color:#858585">1</div>
<div class="t mono" style="left:425px;top:180.78px;font-size:20.6px;line-height:30px;color:#858585">2</div>
<div class="t mono" style="left:425px;top:210.78px;font-size:20.6px;line-height:30px;color:#858585">3</div>
<div class="t mono" style="left:470px;top:150.78px;font-size:20.6px;line-height:30px"><span style="color:#c08ac4">import </span><span style="color:#ffd700">{</span><span style="color:#659cd6"> NgModule </span><span style="color:#ffd700">}</span><span style="color:#c08ac4"> from </span><span style="color:#b5bd68">'@angular/core'</span><span style="color:#d4d4d4">;</span></div>
<div class="t mono" style="left:470px;top:180.78px;font-size:20.6px;line-height:30px"><span style="color:#c08ac4">import </span><span style="color:#ffd700">{</span><span style="color:#659cd6"> NbMenuModule </span><span style="color:#ffd700">}</span><span style="color:#c08ac4"> from </span><span style="color:#b5bd68">'@nebular/theme'</span><span style="color:#d4d4d4">;</span></div>
<div class="t mono" style="left:470px;top:210.78px;font-size:20.6px;line-height:30px"><span style="color:#c08ac4">import </span><span style="color:#ffd700">{</span><span style="color:#659cd6"> TranslateModule</span><span style="color:#d4d4d4">, </span><span style="color:#659cd6">TranslateLoader </span><span style="color:#ffd700">}</span><span style="color:#c08ac4"> from </span><span style="color:#b5bd68">'@ngx-translate/core'</span><span style="color:#d4d4d4">;</span></div>
<div class="t mono" style="left:1428px;top:210.78px;font-size:20.6px;line-height:30px;color:#5c5c5c">Shivkant Dubey, yesterday • TPDT-61: Int</div>
<div class="a" style="left:1904px;top:125px;width:1px;height:105px;background:#3a3a3a"></div>
<div class="a" style="left:1905px;top:131px;width:15px;height:2px;background:#d18616"></div>
</div>
<div class="t" style="left:395.00px;top:246.52px;font-size:13.8px;color:#a8a8a8;font-weight:normal;font-style:normal;font-family:'Liberation Sans';transform:scaleX(0.8739);transform-origin:0 0;">PROBLEMS</div>
<div class="a" style="left:475px;top:241.5px;width:22px;height:22px;border-radius:11px;background:#4d4d4d"></div>
<div class="t" style="left:482.50px;top:246.77px;font-size:13.5px;color:#ffffff;font-weight:normal;font-style:normal;font-family:'Liberation Sans';transform:scaleX(0.8657);transform-origin:0 0;">1</div>
<div class="t" style="left:524.90px;top:246.52px;font-size:13.8px;color:#a8a8a8;font-weight:normal;font-style:normal;font-family:'Liberation Sans';transform:scaleX(0.8922);transform-origin:0 0;">OUTPUT</div>
<div class="t" style="left:606.00px;top:246.52px;font-size:13.8px;color:#a8a8a8;font-weight:normal;font-style:normal;font-family:'Liberation Sans';transform:scaleX(0.8831);transform-origin:0 0;">DEBUG CONSOLE</div>
<div class="t" style="left:743.00px;top:246.52px;font-size:13.8px;color:#e7e7e7;font-weight:normal;font-style:normal;font-family:'Liberation Sans';transform:scaleX(0.9146);transform-origin:0 0;">TERMINAL</div>
<div class="a" style="left:741px;top:268.5px;width:68.5px;height:1.5px;background:#e7e7e7"></div>
<div class="t" style="left:836.80px;top:246.52px;font-size:13.8px;color:#a8a8a8;font-weight:normal;font-style:normal;font-family:'Liberation Sans';transform:scaleX(0.8503);transform-origin:0 0;">PORTS</div>
<div class="t" style="left:907.00px;top:246.52px;font-size:13.8px;color:#a8a8a8;font-weight:normal;font-style:normal;font-family:'Liberation Sans';transform:scaleX(0.8639);transform-origin:0 0;">GITLENS</div>
<div class="t" style="left:988.00px;top:246.52px;font-size:13.8px;color:#a8a8a8;font-weight:normal;font-style:normal;font-family:'Liberation Sans';transform:scaleX(0.9319);transform-origin:0 0;">COMMENTS</div>
<svg style="left:1769px;top:244px" width="17" height="17"><path d="M8.2 0.5v16M0.2 8.5h16" stroke="#c5c5c5" stroke-width="1.5"/></svg>
<svg style="left:1792.5px;top:249.5px" width="10" height="7"><path d="M0.8 0.8l4.2 4.5 4.2-4.5" stroke="#c5c5c5" stroke-width="1.3" fill="none"/></svg>
<svg style="left:1818px;top:251px" width="17" height="5"><circle cx="2" cy="2.2" r="1.6" fill="#c5c5c5"/><circle cx="8.3" cy="2.2" r="1.6" fill="#c5c5c5"/><circle cx="14.6" cy="2.2" r="1.6" fill="#c5c5c5"/></svg>
<svg style="left:1851.5px;top:247px" width="15" height="10"><path d="M1 8.5l6.5-7 6.5 7" stroke="#c5c5c5" stroke-width="1.5" fill="none"/></svg>
<svg style="left:1885.5px;top:246.5px" width="12" height="12"><path d="M0.8 0.8l10.4 10.4M11.2 0.8L0.8 11.2" stroke="#c5c5c5" stroke-width="1.5"/></svg>
<div class="a" style="left:470px;top:274px;width:1px;height:734px;background:#474747"></div>
<div class="a" style="left:1773px;top:274px;width:1px;height:734px;background:#474747"></div>
<div class="a" style="left:1774px;top:274.3px;width:146px;height:27.3px;background:#4d4d4d"></div>
<svg style="left:1791px;top:287.5px" width="8" height="11"><path d="M1 11V1.2h6.5" stroke="#cccccc" stroke-width="1.6" fill="none"/></svg>
<svg style="left:1791px;top:307.5px" width="8" height="11"><path d="M1 0v9.8h6.5" stroke="#cccccc" stroke-width="1.6" fill="none"/></svg>
<svg style="left:1801.5px;top:279px" width="21" height="19"><path d="M3.5 1h16l-2.5 17H1z" stroke="#cccccc" stroke-width="1.4" fill="none" stroke-linejoin="round"/><path d="M6 6l3.5 3-4 3M9.5 13.5h5" stroke="#cccccc" stroke-width="1.2" fill="none"/></svg>
<svg style="left:1801.5px;top:306.5px" width="21" height="19"><path d="M3.5 1h16l-2.5 17H1z" stroke="#cccccc" stroke-width="1.4" fill="none" stroke-linejoin="round"/><path d="M6 6l3.5 3-4 3M9.5 13.5h5" stroke="#cccccc" stroke-width="1.2" fill="none"/></svg>
<div class="t" style="left:1827.50px;top:280.26px;font-size:16px;color:#cccccc;font-weight:normal;font-style:normal;font-family:'Liberation Sans';transform:scaleX(0.9989);transform-origin:0 0;">powershell</div>
<div class="t" style="left:1827.50px;top:308.16px;font-size:16px;color:#cccccc;font-weight:normal;font-style:normal;font-family:'Liberation Sans';transform:scaleX(0.9889);transform-origin:0 0;">node</div>
<div class="a" style="left:1760px;top:284.7px;width:4px;height:4px;background:#555555"></div>
<div class="a" style="left:1761px;top:961px;width:12px;height:26px;background:#424242"></div>
<div class="a" style="left:458.5px;top:642px;width:11px;height:366px;background:#3a3a3a"></div>
<div class="a" style="left:460px;top:1035px;width:0px;height:0px"></div>
<div class="a" style="left:458px;top:285px;width:4px;height:4px;background:#2a8ab8"></div>
<div class="a" style="left:458px;top:301px;width:4px;height:7.5px;background:#2a8ab8"></div>
<div class="a" style="left:466px;top:425px;width:4px;height:7px;background:#e85050"></div>
<div class="a" style="left:458px;top:433px;width:4px;height:7px;background:#2a8ab8"></div>
<div class="a" style="left:458px;top:487px;width:4px;height:7px;background:#2a8ab8"></div>
<div class="a" style="left:458px;top:772px;width:4px;height:8px;background:#555555"></div>
<svg style="left:378px;top:569px" width="12" height="12"><circle cx="6" cy="6" r="4.2" stroke="#8a8a8a" stroke-width="1.6" fill="none"/></svg>
<div class="t mono" style="left:394.5px;top:287.10px;font-size:15px;line-height:20px"><span style="color:#d4d4d4;">requir</span></div>
<div class="t mono" style="left:394.5px;top:307.10px;font-size:15px;line-height:20px"><span style="color:#d4d4d4;">e atte</span></div>
<div class="t mono" style="left:394.5px;top:327.10px;font-size:15px;line-height:20px"><span style="color:#d4d4d4;">ntion,</span></div>
<div class="t mono" style="left:394.5px;top:347.10px;font-size:15px;line-height:20px"><span style="color:#d4d4d4;"> run:</span></div>
<div class="t mono" style="left:394.5px;top:367.10px;font-size:15px;line-height:20px"><span style="color:#d4d4d4;">  npm</span></div>
<div class="t mono" style="left:394.5px;top:387.10px;font-size:15px;line-height:20px"><span style="color:#d4d4d4;">audit</span></div>
<div class="t mono" style="left:394.5px;top:407.10px;font-size:15px;line-height:20px"><span style="color:#d4d4d4;">fix</span></div>
<div class="t mono" style="left:394.5px;top:447.10px;font-size:15px;line-height:20px"><span style="color:#d4d4d4;">To add</span></div>
<div class="t mono" style="left:394.5px;top:467.10px;font-size:15px;line-height:20px"><span style="color:#d4d4d4;">ress a</span></div>
<div class="t mono" style="left:394.5px;top:487.10px;font-size:15px;line-height:20px"><span style="color:#d4d4d4;">ll iss</span></div>
<div class="t mono" style="left:394.5px;top:507.10px;font-size:15px;line-height:20px"><span style="color:#d4d4d4;">ues (i</span></div>
<div class="t mono" style="left:394.5px;top:527.10px;font-size:15px;line-height:20px"><span style="color:#d4d4d4;">ncludi</span></div>
<div class="t mono" style="left:394.5px;top:547.10px;font-size:15px;line-height:20px"><span style="color:#d4d4d4;">ng bre</span></div>
<div class="t mono" style="left:394.5px;top:567.10px;font-size:15px;line-height:20px"><span style="color:#d4d4d4;">aking</span></div>
<div class="t mono" style="left:394.5px;top:587.10px;font-size:15px;line-height:20px"><span style="color:#d4d4d4;">change</span></div>
<div class="t mono" style="left:394.5px;top:607.10px;font-size:15px;line-height:20px"><span style="color:#d4d4d4;">s), ru</span></div>
<div class="t mono" style="left:394.5px;top:627.10px;font-size:15px;line-height:20px"><span style="color:#d4d4d4;">n:</span></div>
<div class="t mono" style="left:394.5px;top:647.10px;font-size:15px;line-height:20px"><span style="color:#d4d4d4;">  npm</span></div>
<div class="t mono" style="left:394.5px;top:667.10px;font-size:15px;line-height:20px"><span style="color:#d4d4d4;">audit</span></div>
<div class="t mono" style="left:394.5px;top:687.10px;font-size:15px;line-height:20px"><span style="color:#d4d4d4;">fix --</span></div>
<div class="t mono" style="left:394.5px;top:707.10px;font-size:15px;line-height:20px"><span style="color:#d4d4d4;">force</span></div>
<div class="t mono" style="left:394.5px;top:747.10px;font-size:15px;line-height:20px"><span style="color:#d4d4d4;">Run `n</span></div>
<div class="t mono" style="left:394.5px;top:767.10px;font-size:15px;line-height:20px"><span style="color:#d4d4d4;">pm aud</span></div>
<div class="t mono" style="left:394.5px;top:787.10px;font-size:15px;line-height:20px"><span style="color:#d4d4d4;">it` fo</span></div>
<div class="t mono" style="left:394.5px;top:807.10px;font-size:15px;line-height:20px"><span style="color:#d4d4d4;">r deta</span></div>
<div class="t mono" style="left:394.5px;top:827.10px;font-size:15px;line-height:20px"><span style="color:#d4d4d4;">ils.</span></div>
<div class="t mono" style="left:394.5px;top:847.10px;font-size:15px;line-height:20px"><span style="color:#d4d4d4;">PS C:\</span></div>
<div class="t mono" style="left:394.5px;top:867.10px;font-size:15px;line-height:20px"><span style="color:#d4d4d4;">Users\</span></div>
<div class="t mono" style="left:394.5px;top:887.10px;font-size:15px;line-height:20px"><span style="color:#d4d4d4;">work\T</span></div>
<div class="t mono" style="left:394.5px;top:907.10px;font-size:15px;line-height:20px"><span style="color:#d4d4d4;">P\Trai</span></div>
<div class="t mono" style="left:394.5px;top:927.10px;font-size:15px;line-height:20px"><span style="color:#d4d4d4;">ning-P</span></div>
<div class="t mono" style="left:394.5px;top:947.10px;font-size:15px;line-height:20px"><span style="color:#d4d4d4;">egasus</span></div>
<div class="t mono" style="left:394.5px;top:967.10px;font-size:15px;line-height:20px"><span style="color:#d4d4d4;">&gt;</span></div>
<div class="a" style="left:395px;top:984.6px;width:9px;height:20px;background:#cccccc"></div>
<div class="t mono" style="left:496.25px;top:307.10px;font-size:15px;line-height:20px"><span style="color:#f23b7c;">Error: </span><span style="color:#4ec5ee;">src/app/pages/pages.component.ts</span><span style="color:#d4d4d4;">:</span><span style="color:#e5e512;">2</span><span style="color:#d4d4d4;">:</span><span style="color:#e5e512;">34</span><span style="color:#d4d4d4;"> - </span><span style="color:#f23b7c;">error</span><span style="color:#999999;"> TS2307: </span><span style="color:#d4d4d4;">Cannot find</span></div>
<div class="t mono" style="left:496.25px;top:327.10px;font-size:15px;line-height:20px"><span style="color:#d4d4d4;"> module '@ngx-translate/core' or its corresponding type declarations.</span></div>
<div class="a" style="left:496.25px;top:365.50px;width:9.00px;height:40px;background:#f9287a"></div>
<div class="t mono" style="left:496.25px;top:367.10px;font-size:15px;line-height:20px"><span style="color:#1e1e1e;">2</span><span style="color:#d4d4d4;"> import { TranslateService } from '@ngx-translate/core';</span></div>
<svg style="left:811.25px;top:392.90px" width="189.0" height="5" viewBox="0 0 189.0 5" overflow="hidden"><path d="M0 2.2 c1.5 -2.1 3 -2.1 4.5 0 s3 2.1 4.5 0 c1.5 -2.1 3 -2.1 4.5 0 s3 2.1 4.5 0 c1.5 -2.1 3 -2.1 4.5 0 s3 2.1 4.5 0 c1.5 -2.1 3 -2.1 4.5 0 s3 2.1 4.5 0 c1.5 -2.1 3 -2.1 4.5 0 s3 2.1 4.5 0 c1.5 -2.1 3 -2.1 4.5 0 s3 2.1 4.5 0 c1.5 -2.1 3 -2.1 4.5 0 s3 2.1 4.5 0 c1.5 -2.1 3 -2.1 4.5 0 s3 2.1 4.5 0 c1.5 -2.1 3 -2.1 4.5 0 s3 2.1 4.5 0 c1.5 -2.1 3 -2.1 4.5 0 s3 2.1 4.5 0 c1.5 -2.1 3 -2.1 4.5 0 s3 2.1 4.5 0 c1.5 -2.1 3 -2.1 4.5 0 s3 2.1 4.5 0 c1.5 -2.1 3 -2.1 4.5 0 s3 2.1 4.5 0 c1.5 -2.1 3 -2.1 4.5 0 s3 2.1 4.5 0 c1.5 -2.1 3 -2.1 4.5 0 s3 2.1 4.5 0 c1.5 -2.1 3 -2.1 4.5 0 s3 2.1 4.5 0 c1.5 -2.1 3 -2.1 4.5 0 s3 2.1 4.5 0 c1.5 -2.1 3 -2.1 4.5 0 s3 2.1 4.5 0 c1.5 -2.1 3 -2.1 4.5 0 s3 2.1 4.5 0 c1.5 -2.1 3 -2.1 4.5 0 s3 2.1 4.5 0 c1.5 -2.1 3 -2.1 4.5 0 s3 2.1 4.5 0" stroke="#f9287a" stroke-width="1.5" fill="none"/></svg>
<div class="t mono" style="left:496.25px;top:447.10px;font-size:15px;line-height:20px"><span style="color:#f23b7c;">Error: </span><span style="color:#4ec5ee;">src/app/pages/pages.component.ts</span><span style="color:#d4d4d4;">:</span><span style="color:#e5e512;">19</span><span style="color:#d4d4d4;">:</span><span style="color:#e5e512;">13</span><span style="color:#d4d4d4;"> - </span><span style="color:#f23b7c;">error</span><span style="color:#999999;"> NG2003: </span><span style="color:#d4d4d4;">No suitabl</span></div>
<div class="t mono" style="left:496.25px;top:467.10px;font-size:15px;line-height:20px"><span style="color:#d4d4d4;">e injection token for parameter 'translate' of class 'PagesComponent'.</span></div>
<div class="t mono" style="left:496.25px;top:487.10px;font-size:15px;line-height:20px"><span style="color:#f23b7c;font-weight:bold">  Consider using the @Inject decorator to specify an injection token.</span></div>
<div class="a" style="left:496.25px;top:525.50px;width:18.00px;height:40px;background:#f9287a"></div>
<div class="t mono" style="left:496.25px;top:527.10px;font-size:15px;line-height:20px"><span style="color:#1e1e1e;">19</span><span style="color:#d4d4d4;">     private translate: TranslateService,</span></div>
<svg style="left:631.25px;top:552.90px" width="81.0" height="5" viewBox="0 0 81.0 5" overflow="hidden"><path d="M0 2.2 c1.5 -2.1 3 -2.1 4.5 0 s3 2.1 4.5 0 c1.5 -2.1 3 -2.1 4.5 0 s3 2.1 4.5 0 c1.5 -2.1 3 -2.1 4.5 0 s3 2.1 4.5 0 c1.5 -2.1 3 -2.1 4.5 0 s3 2.1 4.5 0 c1.5 -2.1 3 -2.1 4.5 0 s3 2.1 4.5 0 c1.5 -2.1 3 -2.1 4.5 0 s3 2.1 4.5 0 c1.5 -2.1 3 -2.1 4.5 0 s3 2.1 4.5 0 c1.5 -2.1 3 -2.1 4.5 0 s3 2.1 4.5 0 c1.5 -2.1 3 -2.1 4.5 0 s3 2.1 4.5 0" stroke="#f9287a" stroke-width="1.5" fill="none"/></svg>
<div class="t mono" style="left:496.25px;top:587.10px;font-size:15px;line-height:20px"><span style="color:#d4d4d4;">  </span><span style="color:#4ec5ee;font-weight:bold">src/app/pages/pages.component.ts</span><span style="color:#d4d4d4;">:</span><span style="color:#e5e512;">19</span><span style="color:#d4d4d4;">:</span><span style="color:#e5e512;">24</span></div>
<div class="a" style="left:532.25px;top:605.50px;width:18.00px;height:40px;background:#f9287a"></div>
<div class="t mono" style="left:496.25px;top:607.10px;font-size:15px;line-height:20px"><span style="color:#d4d4d4;">    </span><span style="color:#1e1e1e;">19</span><span style="color:#d4d4d4;">     private translate: TranslateService,</span></div>
<svg style="left:766.25px;top:632.90px" width="144.0" height="5" viewBox="0 0 144.0 5" overflow="hidden"><path d="M0 2.2 c1.5 -2.1 3 -2.1 4.5 0 s3 2.1 4.5 0 c1.5 -2.1 3 -2.1 4.5 0 s3 2.1 4.5 0 c1.5 -2.1 3 -2.1 4.5 0 s3 2.1 4.5 0 c1.5 -2.1 3 -2.1 4.5 0 s3 2.1 4.5 0 c1.5 -2.1 3 -2.1 4.5 0 s3 2.1 4.5 0 c1.5 -2.1 3 -2.1 4.5 0 s3 2.1 4.5 0 c1.5 -2.1 3 -2.1 4.5 0 s3 2.1 4.5 0 c1.5 -2.1 3 -2.1 4.5 0 s3 2.1 4.5 0 c1.5 -2.1 3 -2.1 4.5 0 s3 2.1 4.5 0 c1.5 -2.1 3 -2.1 4.5 0 s3 2.1 4.5 0 c1.5 -2.1 3 -2.1 4.5 0 s3 2.1 4.5 0 c1.5 -2.1 3 -2.1 4.5 0 s3 2.1 4.5 0 c1.5 -2.1 3 -2.1 4.5 0 s3 2.1 4.5 0 c1.5 -2.1 3 -2.1 4.5 0 s3 2.1 4.5 0 c1.5 -2.1 3 -2.1 4.5 0 s3 2.1 4.5 0 c1.5 -2.1 3 -2.1 4.5 0 s3 2.1 4.5 0" stroke="#4ec5ee" stroke-width="1.5" fill="none"/></svg>
<div class="t mono" style="left:496.25px;top:647.10px;font-size:15px;line-height:20px"><span style="color:#f23b7c;font-weight:bold">    This type does not have a value, so it cannot be used as injection t</span></div>
<div class="t mono" style="left:496.25px;top:667.10px;font-size:15px;line-height:20px"><span style="color:#f23b7c;font-weight:bold">oken.</span></div>
<div class="t mono" style="left:496.25px;top:727.10px;font-size:15px;line-height:20px"><span style="color:#f23b7c;">Error: </span><span style="color:#4ec5ee;">src/app/pages/pages.module.ts</span><span style="color:#d4d4d4;">:</span><span style="color:#e5e512;">3</span><span style="color:#d4d4d4;">:</span><span style="color:#e5e512;">50</span><span style="color:#d4d4d4;"> - </span><span style="color:#f23b7c;">error</span><span style="color:#999999;"> TS2307: </span><span style="color:#d4d4d4;">Cannot find mo</span></div>
<div class="t mono" style="left:496.25px;top:747.10px;font-size:15px;line-height:20px"><span style="color:#d4d4d4;">dule '@ngx-translate/core' or its corresponding type declarations.</span></div>
<div class="a" style="left:496.25px;top:785.50px;width:9.00px;height:20px;background:#f9287a"></div>
<div class="a" style="left:496.25px;top:825.50px;width:9.00px;height:20px;background:#f9287a"></div>
<div class="t mono" style="left:496.25px;top:787.10px;font-size:15px;line-height:20px"><span style="color:#1e1e1e;">3</span><span style="color:#d4d4d4;"> import { TranslateModule, TranslateLoader } from '@ngx-translate/core'</span></div>
<div class="t mono" style="left:496.25px;top:807.10px;font-size:15px;line-height:20px"><span style="color:#d4d4d4;">;</span></div>
<svg style="left:955.25px;top:832.90px" width="189.0" height="5" viewBox="0 0 189.0 5" overflow="hidden"><path d="M0 2.2 c1.5 -2.1 3 -2.1 4.5 0 s3 2.1 4.5 0 c1.5 -2.1 3 -2.1 4.5 0 s3 2.1 4.5 0 c1.5 -2.1 3 -2.1 4.5 0 s3 2.1 4.5 0 c1.5 -2.1 3 -2.1 4.5 0 s3 2.1 4.5 0 c1.5 -2.1 3 -2.1 4.5 0 s3 2.1 4.5 0 c1.5 -2.1 3 -2.1 4.5 0 s3 2.1 4.5 0 c1.5 -2.1 3 -2.1 4.5 0 s3 2.1 4.5 0 c1.5 -2.1 3 -2.1 4.5 0 s3 2.1 4.5 0 c1.5 -2.1 3 -2.1 4.5 0 s3 2.1 4.5 0 c1.5 -2.1 3 -2.1 4.5 0 s3 2.1 4.5 0 c1.5 -2.1 3 -2.1 4.5 0 s3 2.1 4.5 0 c1.5 -2.1 3 -2.1 4.5 0 s3 2.1 4.5 0 c1.5 -2.1 3 -2.1 4.5 0 s3 2.1 4.5 0 c1.5 -2.1 3 -2.1 4.5 0 s3 2.1 4.5 0 c1.5 -2.1 3 -2.1 4.5 0 s3 2.1 4.5 0 c1.5 -2.1 3 -2.1 4.5 0 s3 2.1 4.5 0 c1.5 -2.1 3 -2.1 4.5 0 s3 2.1 4.5 0 c1.5 -2.1 3 -2.1 4.5 0 s3 2.1 4.5 0 c1.5 -2.1 3 -2.1 4.5 0 s3 2.1 4.5 0 c1.5 -2.1 3 -2.1 4.5 0 s3 2.1 4.5 0 c1.5 -2.1 3 -2.1 4.5 0 s3 2.1 4.5 0" stroke="#f9287a" stroke-width="1.5" fill="none"/></svg>
<div class="t mono" style="left:496.25px;top:887.10px;font-size:15px;line-height:20px"><span style="color:#f23b7c;">Error: </span><span style="color:#4ec5ee;">src/app/pages/pages.module.ts</span><span style="color:#d4d4d4;">:</span><span style="color:#e5e512;">4</span><span style="color:#d4d4d4;">:</span><span style="color:#e5e512;">37</span><span style="color:#d4d4d4;"> - </span><span style="color:#f23b7c;">error</span><span style="color:#999999;"> TS2307: </span><span style="color:#d4d4d4;">Cannot find module '@ngx-translate/http-loader' or its corresponding type declara</span></div>
<div class="t mono" style="left:496.25px;top:907.10px;font-size:15px;line-height:20px"><span style="color:#d4d4d4;">tions.</span></div>
<div class="a" style="left:496.25px;top:945.50px;width:9.00px;height:40px;background:#f9287a"></div>
<div class="t mono" style="left:496.25px;top:947.10px;font-size:15px;line-height:20px"><span style="color:#1e1e1e;">4</span><span style="color:#d4d4d4;"> import { TranslateHttpLoader } from '@ngx-translate/http-loader';</span></div>
<svg style="left:838.25px;top:972.90px" width="252.0" height="5" viewBox="0 0 252.0 5" overflow="hidden"><path d="M0 2.2 c1.5 -2.1 3 -2.1 4.5 0 s3 2.1 4.5 0 c1.5 -2.1 3 -2.1 4.5 0 s3 2.1 4.5 0 c1.5 -2.1 3 -2.1 4.5 0 s3 2.1 4.5 0 c1.5 -2.1 3 -2.1 4.5 0 s3 2.1 4.5 0 c1.5 -2.1 3 -2.1 4.5 0 s3 2.1 4.5 0 c1.5 -2.1 3 -2.1 4.5 0 s3 2.1 4.5 0 c1.5 -2.1 3 -2.1 4.5 0 s3 2.1 4.5 0 c1.5 -2.1 3 -2.1 4.5 0 s3 2.1 4.5 0 c1.5 -2.1 3 -2.1 4.5 0 s3 2.1 4.5 0 c1.5 -2.1 3 -2.1 4.5 0 s3 2.1 4.5 0 c1.5 -2.1 3 -2.1 4.5 0 s3 2.1 4.5 0 c1.5 -2.1 3 -2.1 4.5 0 s3 2.1 4.5 0 c1.5 -2.1 3 -2.1 4.5 0 s3 2.1 4.5 0 c1.5 -2.1 3 -2.1 4.5 0 s3 2.1 4.5 0 c1.5 -2.1 3 -2.1 4.5 0 s3 2.1 4.5 0 c1.5 -2.1 3 -2.1 4.5 0 s3 2.1 4.5 0 c1.5 -2.1 3 -2.1 4.5 0 s3 2.1 4.5 0 c1.5 -2.1 3 -2.1 4.5 0 s3 2.1 4.5 0 c1.5 -2.1 3 -2.1 4.5 0 s3 2.1 4.5 0 c1.5 -2.1 3 -2.1 4.5 0 s3 2.1 4.5 0 c1.5 -2.1 3 -2.1 4.5 0 s3 2.1 4.5 0 c1.5 -2.1 3 -2.1 4.5 0 s3 2.1 4.5 0 c1.5 -2.1 3 -2.1 4.5 0 s3 2.1 4.5 0 c1.5 -2.1 3 -2.1 4.5 0 s3 2.1 4.5 0 c1.5 -2.1 3 -2.1 4.5 0 s3 2.1 4.5 0 c1.5 -2.1 3 -2.1 4.5 0 s3 2.1 4.5 0 c1.5 -2.1 3 -2.1 4.5 0 s3 2.1 4.5 0 c1.5 -2.1 3 -2.1 4.5 0 s3 2.1 4.5 0" stroke="#f9287a" stroke-width="1.5" fill="none"/></svg>
<div class="a" style="left:0;top:1008px;width:43px;height:26px;background:#3b5cc4"></div>
<svg style="left:14px;top:1012px" width="15" height="18"><path d="M1.9 5.5l5.5 5.2-5.5 5.2M13.1 1l-5 5 5 5" stroke="#ffffff" stroke-width="1.4" fill="none"/></svg>
<svg style="left:50px;top:1010px" width="17" height="21"><circle cx="5" cy="4.6" r="2.4" stroke="#ffffff" stroke-width="1.4" fill="none"/><circle cx="5" cy="16.9" r="2.4" stroke="#ffffff" stroke-width="1.4" fill="none"/><circle cx="13" cy="8" r="2.4" stroke="#ffffff" stroke-width="1.4" fill="none"/><path d="M5 7v7.5M13 10.4c0 3-2 3.6-8 4" stroke="#ffffff" stroke-width="1.4" fill="none"/></svg>
<div class="t" style="left:71.60px;top:1014.26px;font-size:16px;color:#ffffff;font-weight:normal;font-style:normal;font-family:'Liberation Sans';transform:scaleX(0.9505);transform-origin:0 0;">development*</div>
<svg style="left:173px;top:1013px" width="19" height="17"><path d="M2 7.5a7 6.5 0 0 1 13-2.5M17 9.5a7 6.5 0 0 1-13 2.5" stroke="#ffffff" stroke-width="1.5" fill="none"/><path d="M11.5 5.5h4.3V1.2M7.5 11.5H3.2v4.3" stroke="#ffffff" stroke-width="1.5" fill="none"/></svg>
<svg style="left:207px;top:1011.5px" width="20" height="21"><path d="M4.3 0.5v19M9.2 0.5v19" stroke="#ffffff" stroke-width="1.3"/><circle cx="4.3" cy="4" r="2.5" fill="#515151" stroke="#ffffff" stroke-width="1.4"/><circle cx="4.3" cy="14" r="2.5" fill="#515151" stroke="#ffffff" stroke-width="1.4"/><circle cx="14.3" cy="9" r="2.5" fill="#515151" stroke="#ffffff" stroke-width="1.4"/><path d="M9.2 15c0-2.5 2-3 3.3-4" stroke="#ffffff" stroke-width="1.3" fill="none"/></svg>
<svg style="left:246px;top:1013.5px" width="17" height="17"><circle cx="8.2" cy="8.2" r="7.2" stroke="#ffffff" stroke-width="1.4" fill="none"/><path d="M5.2 5.2l6 6M11.2 5.2l-6 6" stroke="#ffffff" stroke-width="1.4"/></svg>
<div class="t" style="left:267.50px;top:1014.26px;font-size:16px;color:#ffffff;font-weight:normal;font-style:normal;font-family:'Liberation Sans';transform:scaleX(0.6743);transform-origin:0 0;">1</div>
<svg style="left:280px;top:1013px" width="17" height="16"><path d="M8.2 1L1 15h14.6z" stroke="#ffffff" stroke-width="1.4" fill="none" stroke-linejoin="round"/><path d="M8.2 5.5v5M8.2 11.8v1.6" stroke="#ffffff" stroke-width="1.4"/></svg>
<div class="t" style="left:300.80px;top:1014.26px;font-size:16px;color:#ffffff;font-weight:normal;font-style:normal;font-family:'Liberation Sans';transform:scaleX(0.8990);transform-origin:0 0;">0</div>
<svg style="left:330.5px;top:1013px" width="17" height="17"><circle cx="8.2" cy="6.3" r="1.8" stroke="#ffffff" stroke-width="1.3" fill="none"/><path d="M8.2 8L4.5 16.5M8.2 8l3.7 8.5M5.8 13.5h4.8M4.8 2.8a5 5 0 0 0 0 7M11.6 2.8a5 5 0 0 1 0 7M2.3 0.8a8 8 0 0 0 0 11M14.1 0.8a8 8 0 0 1 0 11" stroke="#ffffff" stroke-width="1.3" fill="none"/></svg>
<div class="t" style="left:350.00px;top:1014.26px;font-size:16px;color:#ffffff;font-weight:normal;font-style:normal;font-family:'Liberation Sans';transform:scaleX(0.8990);transform-origin:0 0;">0</div>
<svg style="left:379px;top:1019px" width="9" height="9"><path d="M1 1.5h6.5v6H1z" stroke="#ffffff" stroke-width="1.5" fill="none"/><path d="M4 0.5v2" stroke="#ffffff" stroke-width="1"/></svg>
<div class="t" style="left:390.60px;top:1014.26px;font-size:16px;color:#ffffff;font-weight:normal;font-style:normal;font-family:'Liberation Sans';transform:scaleX(0.9425);transform-origin:0 0;">tabnine starter</div>
<svg style="left:1054px;top:1012px" width="12" height="20"><circle cx="6" cy="10" r="3.6" stroke="#ffffff" stroke-width="1.5" fill="none"/><path d="M6 0.5v5.8M6 13.7v6" stroke="#ffffff" stroke-width="1.5"/></svg>
<div class="t" style="left:1073.00px;top:1014.26px;font-size:16px;color:#ffffff;font-weight:normal;font-style:normal;font-family:'Liberation Sans';transform:scaleX(0.9216);transform-origin:0 0;">Shivkant Dubey, yesterday</div>
<div class="t" style="left:1267.00px;top:1014.26px;font-size:16px;color:#ffffff;font-weight:normal;font-style:normal;font-family:'Liberation Sans';transform:scaleX(0.8924);transform-origin:0 0;">Ln 3, Col 50</div>
<div class="t" style="left:1364.30px;top:1014.26px;font-size:16px;color:#ffffff;font-weight:normal;font-style:normal;font-family:'Liberation Sans';transform:scaleX(0.8573);transform-origin:0 0;">Spaces: 2</div>
<div class="t" style="left:1446.00px;top:1014.26px;font-size:16px;color:#ffffff;font-weight:normal;font-style:normal;font-family:'Liberation Sans';transform:scaleX(0.8604);transform-origin:0 0;">UTF-8</div>
<div class="t" style="left:1504.70px;top:1014.26px;font-size:16px;color:#ffffff;font-weight:normal;font-style:normal;font-family:'Liberation Sans';transform:scaleX(0.7898);transform-origin:0 0;">CRLF</div>
<div class="t" style="left:1557.40px;top:1014.26px;font-size:16px;color:#ffffff;font-weight:normal;font-style:normal;font-family:'Liberation Sans';transform:scaleX(0.9648);transform-origin:0 0;">{ }</div>
<div class="t" style="left:1580.40px;top:1014.26px;font-size:16px;color:#ffffff;font-weight:normal;font-style:normal;font-family:'Liberation Sans';transform:scaleX(0.9076);transform-origin:0 0;">TypeScript</div>
<svg style="left:1668px;top:1012.5px" width="15" height="19"><circle cx="7.3" cy="7" r="2" fill="#ffffff"/><path d="M4.2 10.2a4.5 4.5 0 1 1 6.2 0M2.2 12.5a7.2 7.2 0 1 1 10.2 0" stroke="#ffffff" stroke-width="1.4" fill="none"/><path d="M7.3 9v9.5" stroke="#ffffff" stroke-width="2"/></svg>
<div class="t" style="left:1687.70px;top:1014.26px;font-size:16px;color:#ffffff;font-weight:normal;font-style:normal;font-family:'Liberation Sans';transform:scaleX(0.8941);transform-origin:0 0;">Go Live</div>
<svg style="left:1758px;top:1013px" width="17" height="10"><path d="M1.2 8.5a7.3 7.3 0 0 1 14.6 0" stroke="#ffffff" stroke-width="1.5" fill="none"/></svg>
<svg style="left:1794.5px;top:1016px" width="19" height="14"><path d="M1 8l3.5 4L13 1.5M7.2 10.8l1.4 1.2L18 1.5" stroke="#ffffff" stroke-width="1.5" fill="none"/></svg>
<div class="t" style="left:1816.00px;top:1014.26px;font-size:16px;color:#ffffff;font-weight:normal;font-style:normal;font-family:'Liberation Sans';transform:scaleX(0.9308);transform-origin:0 0;">Prettier</div>
<svg style="left:1884px;top:1011px" width="19" height="20"><path d="M2.5 14.5c1.5-1.2 1.8-2.5 1.8-5.5a5.2 5.2 0 0 1 8-4.4M13.5 8.5c.1 3 .5 4.8 2.5 6M1.5 15h15.5M7.5 15.5a2 2 0 0 0 3.6 0" stroke="#ffffff" stroke-width="1.4" fill="none"/><circle cx="15.5" cy="4" r="3.3" fill="#ffffff"/></svg>
<svg style="left:15px;top:1044.5px" width="24" height="24"><path d="M0 3.3l9.6-1.3v9.3H0zM10.8 1.8L24 0v11.3H10.8zM0 12.6h9.6v9.3L0 20.7zM10.8 12.6H24V24l-13.2-1.8z" fill="#ffffff"/></svg>
<div class="a" style="left:54px;top:1034px;width:387px;height:45.5px;background:#f0f0f0;border:2px solid #c9c9c9"></div>
<svg style="left:72px;top:1046.5px" width="25" height="23"><circle cx="15.5" cy="8.5" r="7.3" stroke="#1a1a1a" stroke-width="1.6" fill="none"/><path d="M10.2 13.8L1 23" stroke="#1a1a1a" stroke-width="1.8"/></svg>
<div class="t" style="left:114.70px;top:1048.22px;font-size:21px;color:#2a2a2a;font-weight:normal;font-style:normal;font-family:'Liberation Sans';transform:scaleX(0.9889);transform-origin:0 0;">Search</div>
<div class="a" style="left:355.5px;top:1039.5px;width:80.5px;height:35px;background:#e4e4e4;border-radius:6px"></div>
<svg style="left:378px;top:1042px" width="36" height="30"><defs><linearGradient id="bcg" x1="0" y1="0" x2="0" y2="1"><stop offset="0" stop-color="#f7a21b"/><stop offset="0.55" stop-color="#e0880c"/><stop offset="0.6" stop-color="#b86508"/><stop offset="1" stop-color="#c87010"/></linearGradient></defs><path d="M12 6V3a2 2 0 0 1 2-2h8a2 2 0 0 1 2 2v3" stroke="#2a2a2a" stroke-width="2.4" fill="none"/><rect x="1" y="6" width="34" height="23" rx="2.5" fill="url(#bcg)"/><rect x="15" y="16" width="6" height="5" rx="1" fill="#ffd84a"/></svg>
<div class="a" style="left:844.6px;top:1034.5px;width:55px;height:45.5px;background:rgba(255,255,255,0.17)"></div>
<svg style="left:461px;top:1047px" width="24" height="21"><path d="M0.5 3a1.5 1.5 0 0 1 1.5-1.5h6.5l2 2.5h12a1.5 1.5 0 0 1 1.5 1.5V19a1.5 1.5 0 0 1-1.5 1.5H2A1.5 1.5 0 0 1 .5 19z" fill="#e8b22a"/><path d="M0.5 7h23v12a1.5 1.5 0 0 1-1.5 1.5H2A1.5 1.5 0 0 1 .5 19z" fill="#ffcf48"/><path d="M7 14.5h10v6H7z" fill="#2f7fd6"/><path d="M9.5 17h5v3.5h-5z" fill="#ffcf48"/></svg>
<svg style="left:519.5px;top:1045px" width="22" height="25"><defs><linearGradient id="brg" x1="0" y1="0" x2="0" y2="1"><stop offset="0" stop-color="#ff5a1f"/><stop offset="1" stop-color="#e8421a"/></linearGradient></defs><path d="M5 1.5L8 0h6l3 1.5 3.5.5-.8 3.5 1.3 3.5L18 20l-7 4.5L4 20 1 9l1.3-3.5L1.5 2z" fill="url(#brg)"/><path d="M4 8.5l3-2.5 4 1 4-1 3 2.5-.5 3-2.5 4.5-4 3.5-4-3.5-2.5-4.5z" fill="#ffffff"/><path d="M6.5 10.5l2.5.8-.5 1.5zM15.5 10.5l-2.5.8.5 1.5zM9 15.5l2-1 2 1-2 1.8z" fill="#f05020"/></svg>
<svg style="left:574px;top:1045px" width="25" height="25"><circle cx="12.5" cy="12.5" r="12" fill="#db4437"/><path d="M12.5 12.5L2.1 6.5A12 12 0 0 0 12.5 24.5z" fill="#0f9d58"/><path d="M12.5 12.5L12.5 24.5A12 12 0 0 0 22.9 6.5z" fill="#ffcd40"/><path d="M12.5 12.5L22.9 6.5 A12 12 0 0 0 2.1 6.5z" fill="#db4437"/><circle cx="12.5" cy="12.5" r="5.5" fill="#ffffff"/><circle cx="12.5" cy="12.5" r="4.3" fill="#1a73e8"/></svg>
<svg style="left:631.8px;top:1045px" width="25" height="25"><circle cx="12.5" cy="12.5" r="12" fill="#db4437"/><path d="M12.5 12.5L2.1 6.5A12 12 0 0 0 12.5 24.5z" fill="#0f9d58"/><path d="M12.5 12.5L12.5 24.5A12 12 0 0 0 22.9 6.5z" fill="#ffcd40"/><path d="M12.5 12.5L22.9 6.5 A12 12 0 0 0 2.1 6.5z" fill="#db4437"/><circle cx="12.5" cy="12.5" r="5.5" fill="#ffffff"/><circle cx="12.5" cy="12.5" r="4.3" fill="#1a73e8"/><circle cx="19" cy="19" r="6" fill="#6b4a2a"/><circle cx="19" cy="17" r="2.5" fill="#e0b070"/></svg>
<svg style="left:688px;top:1044px" width="26" height="25"><circle cx="15" cy="4" r="3.3" fill="#7b83eb"/><circle cx="22" cy="5.5" r="2.5" fill="#5059c9"/><rect x="17" y="9" width="8.5" height="10" rx="2" fill="#5059c9"/><rect x="8" y="8.5" width="12" height="13" rx="2" fill="#7b83eb"/><rect x="1" y="6" width="13" height="13" rx="1.5" fill="#4b53bc"/><path d="M4 9h7M7.5 9v8" stroke="#ffffff" stroke-width="2"/><rect x="6" y="17.5" width="19" height="7" rx="1.5" fill="#1ec8c8"/><text x="15.5" y="23.5" font-size="6.5" font-weight="bold" text-anchor="middle" fill="#0a2a5a" font-family="Liberation Sans">NEW</text></svg>
<svg style="left:747px;top:1045px" width="22" height="25"><defs><linearGradient id="brg" x1="0" y1="0" x2="0" y2="1"><stop offset="0" stop-color="#ff5a1f"/><stop offset="1" stop-color="#e8421a"/></linearGradient></defs><path d="M5 1.5L8 0h6l3 1.5 3.5.5-.8 3.5 1.3 3.5L18 20l-7 4.5L4 20 1 9l1.3-3.5L1.5 2z" fill="url(#brg)"/><path d="M4 8.5l3-2.5 4 1 4-1 3 2.5-.5 3-2.5 4.5-4 3.5-4-3.5-2.5-4.5z" fill="#ffffff"/><path d="M6.5 10.5l2.5.8-.5 1.5zM15.5 10.5l-2.5.8.5 1.5zM9 15.5l2-1 2 1-2 1.8z" fill="#f05020"/></svg>
<svg style="left:758px;top:1057px" width="14" height="14"><circle cx="7" cy="7" r="6.5" fill="#222222"/><path d="M2 9l10-4" stroke="#ffffff" stroke-width="1.5"/></svg>
<svg style="left:803px;top:1046px" width="23" height="23"><circle cx="11.5" cy="11.5" r="11.3" fill="#1ed760"/><path d="M5.5 8.2c4-1.3 8.5-1 12 1M6.3 11.5c3.3-1 7-.7 9.8 1M7 14.6c2.6-.7 5.5-.5 7.7.8" stroke="#111111" stroke-width="1.9" stroke-linecap="round" fill="none"/></svg>
<svg style="left:859px;top:1045px" width="25" height="25" viewBox="0 0 100 100"><path fill="#1e88d8" d="M96.46 10.8L75.86.87a6.23 6.23 0 0 0-7.1 1.2L29.33 38.04 12.15 25.01a4.160 4.16 0 0 0-5.32.24L1.33 30.25a4.16 4.16 0 0 0 0 6.16L16.23 50 1.33 63.6a4.16 4.16 0 0 0 0 6.14l5.5 5a4.16 4.16 0 0 0 5.32.24l17.18-13.04 39.43 35.97a6.23 6.23 0 0 0 7.1 1.2l20.6-9.92A6.25 6.25 0 0 0 100 83.6V16.4a6.25 6.25 0 0 0-3.54-5.6zM75.01 72.7L45.1 50l29.9-22.7v45.4z"/><path fill="#3fb0f6" d="M72 0v100l3.86-.87 20.6-9.92A6.25 6.25 0 0 0 100 83.6V16.4a6.25 6.25 0 0 0-3.54-5.6L75.86.87z"/></svg>
<div class="a" style="left:680px;top:1077px;width:29px;height:3px;background:#f5f0c0"></div>
<div class="a" style="left:709px;top:1077px;width:13px;height:3px;background:#c8c8a0"></div>
<div class="a" style="left:737.5px;top:1077px;width:42.5px;height:3px;background:#f5f0c0"></div>
<div class="a" style="left:795px;top:1077px;width:41.5px;height:3px;background:#f5f0c0"></div>
<div class="a" style="left:845px;top:1077px;width:54.39999999999998px;height:3px;background:#f5f0c0"></div>
<svg style="left:1284px;top:1037px" width="40" height="40"><defs><linearGradient id="wcg" x1="0" y1="0" x2="0" y2="1"><stop offset="0" stop-color="#e6f0fd"/><stop offset="1" stop-color="#9fc2ee"/></linearGradient><linearGradient id="wdg" x1="0" y1="0" x2="0" y2="1"><stop offset="0" stop-color="#52a8ff"/><stop offset="1" stop-color="#1f6fe8"/></linearGradient></defs><circle cx="17" cy="19" r="8.5" fill="url(#wcg)"/><ellipse cx="18.5" cy="26" rx="16.5" ry="8" fill="url(#wcg)"/><path d="M0 -8 C3 -3 5 1 5 3.5 A5 5 0 0 1 -5 3.5 C-5 1 -3 -3 0 -8z" transform="translate(15.5,30) rotate(-22)" fill="url(#wdg)"/><path d="M0 -8 C3 -3 5 1 5 3.5 A5 5 0 0 1 -5 3.5 C-5 1 -3 -3 0 -8z" transform="translate(28,30) rotate(-22)" fill="url(#wdg)"/><circle cx="28" cy="10" r="8.2" fill="#c8281e"/><text x="28" y="14.2" font-size="11.5" text-anchor="middle" fill="#fff" font-family="Liberation Sans">1</text></svg>
<div class="t" style="left:1332.50px;top:1048.72px;font-size:21px;color:#ffffff;font-weight:normal;font-style:normal;font-family:'Liberation Sans';transform:scaleX(0.9271);transform-origin:0 0;">27°C</div>
<div class="t" style="left:1390.00px;top:1048.72px;font-size:21px;color:#ffffff;font-weight:normal;font-style:normal;font-family:'Liberation Sans';transform:scaleX(0.9432);transform-origin:0 0;">Rain showers</div>
<svg style="left:1539px;top:1052px" width="19" height="11"><path d="M1 10l8.5-8.5L18 10" stroke="#ffffff" stroke-width="1.4" fill="none"/></svg>
<svg style="left:1575px;top:1044px" width="18" height="27"><rect x="2.9" y="0.75" width="11.3" height="19.5" rx="2.2" fill="#ffffff"/><path d="M1.2 12v3a7.3 6.5 0 0 0 14.6 0v-3" stroke="#ffffff" stroke-width="1.2" fill="none"/><path d="M8.5 21.5v3.5M5 25.3h7" stroke="#ffffff" stroke-width="1.3"/></svg>
<svg style="left:1607px;top:1047px" width="27" height="19"><rect x="5.9" y="3.9" width="18.4" height="13" stroke="#ffffff" stroke-width="1.2" fill="none"/><rect x="6.2" y="5.9" width="16" height="9.1" fill="#ffffff"/><rect x="24.6" y="8.3" width="1.5" height="4.2" fill="#ffffff"/><path d="M1 4h7.2v2.6a3.6 3.6 0 0 1-7.2 0z" fill="#3a3527" stroke="#ffffff" stroke-width="1.2"/><path d="M2.8 0.3v3.7M6.4 0.3v3.7M4.6 10.2v7" stroke="#ffffff" stroke-width="1.2"/></svg>
<svg style="left:1647px;top:1048px" width="21" height="21"><path d="M1.5 18A17 17 0 0 1 18.5 1M6.5 18A12 12 0 0 1 18.5 6M11.5 18A7 7 0 0 1 18.5 11" stroke="#ffffff" stroke-width="1.3" fill="none"/><circle cx="17.6" cy="17.4" r="1.8" fill="#ffffff"/></svg>
<svg style="left:1686px;top:1046px" width="24" height="24"><path d="M15.8 2.8a1.9 1.9 0 0 1 3.2 1.7L10.6 19.8l-2.6 1.3.2-2.9z" stroke="#ffffff" stroke-width="1.2" fill="none" stroke-linejoin="round"/><path d="M13.4 6.6l2.6 1.5" stroke="#ffffff" stroke-width="1.1"/><path d="M8.3 20.8C3.5 21.5 1.5 18 3 15.2S7.5 12.5 9.2 13.3M17.5 8.5c3.3-.3 4.6 2.2 3.2 3.6-1 1-2.8.9-4.6.4" stroke="#ffffff" stroke-width="1.3" fill="none"/></svg>
<div class="t" style="left:1732.50px;top:1047.49px;font-size:19.5px;color:#ffffff;font-weight:normal;font-style:normal;font-family:'Liberation Sans';transform:scaleX(0.7928);transform-origin:0 0;">ENG</div>
<div class="t" style="left:1787.00px;top:1047.49px;font-size:19.5px;color:#ffffff;font-weight:normal;font-style:normal;font-family:'Liberation Sans';transform:scaleX(0.8812);transform-origin:0 0;">19:20</div>
<svg style="left:1857px;top:1045px" width="26" height="25"><path d="M0.5 0.5h25v19H16l-3 4.5-3-4.5H.5z" fill="#ffffff"/><path d="M5 6h16M5 10h16M5 14h10" stroke="#555555" stroke-width="1.2"/></svg>
<div class="a" style="left:1912.5px;top:1034px;width:1.5px;height:46px;background:#8a8a8a"></div>
</body></html>
